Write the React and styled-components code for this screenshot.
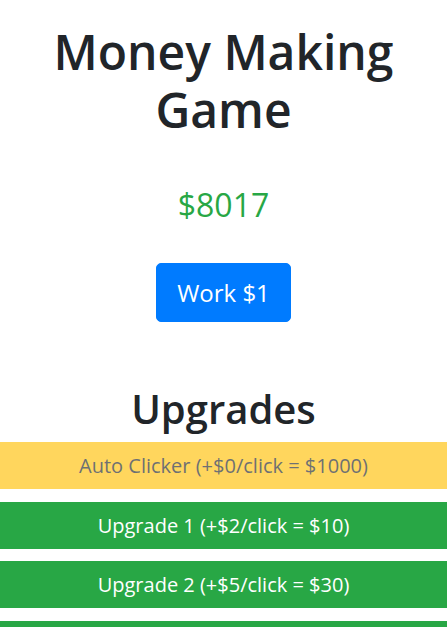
import React from "react";
import styled, { createGlobalStyle } from "styled-components";

const GlobalStyle = createGlobalStyle`
  body {
    margin: 0;
    background: #fff;
    color: #212529;
    font-family: "Open Sans", "Noto Sans", sans-serif;
  }
`;

const Page = styled.div`
  text-align: center;
`;

const Title = styled.h1`
  margin: 23px 24px 0;
  font-size: 48px;
  font-weight: 600;
  line-height: 58px;
  color: #212529;
`;

const Balance = styled.h2`
  margin: 46px 0 0;
  font-size: 32px;
  font-weight: 400;
  line-height: 40px;
  color: #28a745;
`;

const WorkButton = styled.button`
  margin-top: 38px;
  padding: 10px 20px;
  font-family: inherit;
  font-size: 24px;
  line-height: 37px;
  color: #fff;
  background: #007bff;
  border: 1px solid #007bff;
  border-radius: 5px;
`;

const Heading = styled.h1`
  margin: 63px 0 9px;
  font-size: 40px;
  font-weight: 600;
  line-height: 48px;
`;

const UpgradeList = styled.div`
  display: flex;
  flex-direction: column;
  gap: 12.5px;
`;

const UpgradeButton = styled.button`
  display: block;
  width: 100%;
  padding: 7px 16px;
  font-family: inherit;
  font-size: 20px;
  line-height: 31px;
  border: 1px solid ${(p) => (p.$locked ? "#ffc107" : "#28a745")};
  border-radius: 0;
  background: ${(p) => (p.$locked ? "#ffc107" : "#28a745")};
  color: ${(p) => (p.$locked ? "#212529" : "#fff")};
  opacity: ${(p) => (p.$locked ? 0.65 : 1)};
`;

const upgrades = [
  { name: "Auto Clicker", gain: 0, cost: 1000, locked: true },
  { name: "Upgrade 1", gain: 2, cost: 10 },
  { name: "Upgrade 2", gain: 5, cost: 30 },
  { name: "Upgrade 3", gain: 10, cost: 100 },
];

export default function App() {
  return (
    <Page>
      <GlobalStyle />
      <Title>Money Making Game</Title>
      <Balance>$8017</Balance>
      <WorkButton>Work $1</WorkButton>
      <Heading>Upgrades</Heading>
      <UpgradeList>
        {upgrades.map((u) => (
          <UpgradeButton key={u.name} $locked={u.locked} disabled={u.locked}>
            {u.name} (+${u.gain}/click = ${u.cost})
          </UpgradeButton>
        ))}
      </UpgradeList>
    </Page>
  );
}
